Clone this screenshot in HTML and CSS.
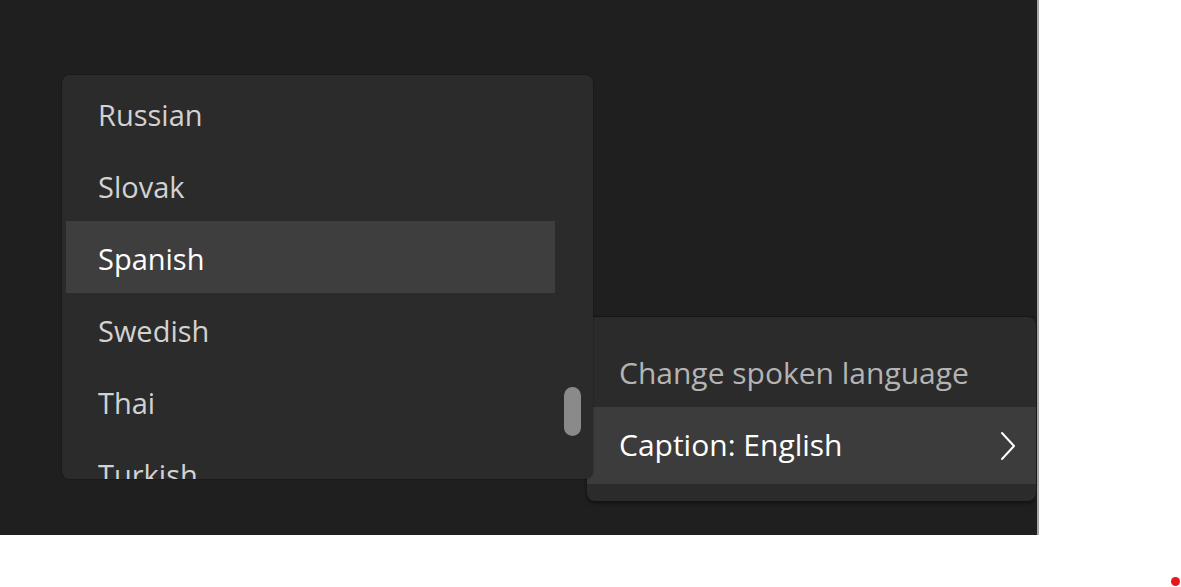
FILE: index.html
```html
<!DOCTYPE html>
<html lang="en">
<head>
<meta charset="utf-8">
<title>Caption language</title>
<link rel="stylesheet" href="styles.css">
</head>
<body>
<div class="stage">
  <div class="menu menu-caption">
    <div class="item item-muted">Change spoken language</div>
    <div class="item item-active">
      <span>Caption: English</span>
      <svg class="chevron" width="16" height="30" viewBox="0 0 16 30" aria-hidden="true">
        <path d="M2 2 L14 15 L2 28" fill="none" stroke="#ffffff" stroke-width="2" stroke-linecap="round" stroke-linejoin="round"/>
      </svg>
    </div>
  </div>
  <div class="menu menu-lang">
    <div class="list">
      <div class="lang">Russian</div>
      <div class="lang">Slovak</div>
      <div class="lang lang-selected">Spanish</div>
      <div class="lang">Swedish</div>
      <div class="lang">Thai</div>
      <div class="lang">Turkish</div>
    </div>
    <div class="thumb"></div>
  </div>
</div>
<div class="dot"></div>
</body>
</html>
```
FILE: styles.css
```css
html, body {
  margin: 0;
  padding: 0;
  background: #ffffff;
}
body {
  width: 1181px;
  height: 587px;
  position: relative;
  overflow: hidden;
  font-family: "Open Sans", "Noto Sans", "Liberation Sans", sans-serif;
}
.stage {
  width: 1037px;
  height: 535px;
  background: #1f1f1f;
  border-right: 2px solid #a6a6a6;
  position: relative;
  overflow: hidden;
}
.menu {
  position: absolute;
  background: #2b2b2b;
  border-radius: 8px;
  overflow: hidden;
}
.menu-lang {
  left: 62px;
  top: 75px;
  width: 531px;
  height: 404px;
  box-shadow: 0 0 0 1px rgba(0,0,0,0.15);
}
.list {
  display: flex;
  flex-direction: column;
  padding: 2px 38px 0 4px;
}
.lang {
  height: 72px;
  display: flex;
  align-items: center;
  padding-left: 32px;
  padding-top: 2px;
  box-sizing: border-box;
  font-size: 29px;
  color: #d2d2d2;
  flex-shrink: 0;
}
.lang-selected {
  background: #3e3e3e;
  color: #ffffff;
}
.thumb {
  position: absolute;
  left: 502px;
  top: 312px;
  width: 17px;
  height: 49px;
  border-radius: 9px;
  background: #8a8a8a;
}
.menu-caption {
  left: 587px;
  top: 317px;
  width: 449px;
  height: 184px;
  padding-top: 20px;
  box-sizing: border-box;
  box-shadow: 0 -1px 0 #161616, 0 2px 4px rgba(0,0,0,0.5);
  display: flex;
  flex-direction: column;
}
.item {
  display: flex;
  align-items: center;
  padding: 0 20px 0 32px;
  font-size: 30px;
  box-sizing: border-box;
  flex-shrink: 0;
}
.item-muted {
  height: 70px;
  color: #b4b4b4;
}
.item-active {
  height: 77px;
  padding-bottom: 3px;
  background: #3c3c3c;
  color: #ffffff;
  justify-content: space-between;
}
.chevron {
  display: block;
  margin-top: 3px;
}
.dot {
  position: absolute;
  left: 1171px;
  top: 577px;
  width: 9px;
  height: 9px;
  border-radius: 50%;
  background: #e3191c;
}
```
